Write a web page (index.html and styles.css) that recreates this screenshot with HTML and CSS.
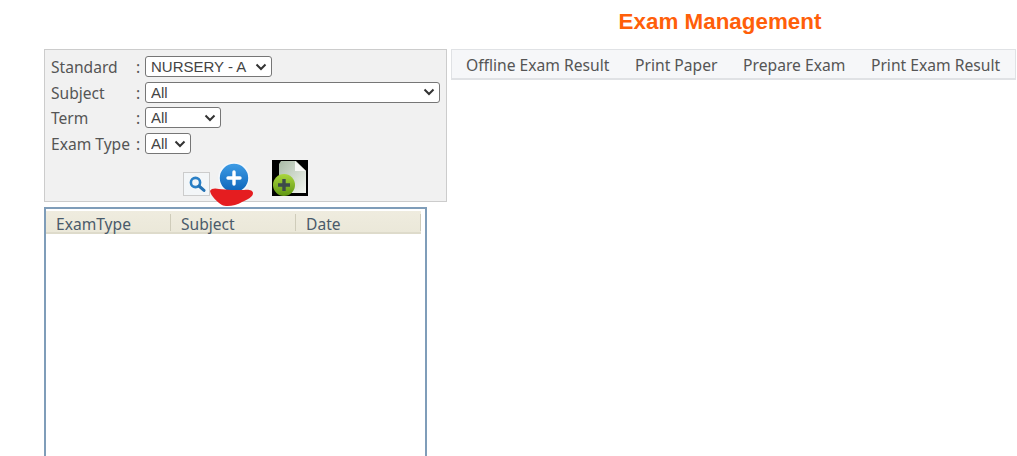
FILE: index.html
```
<!DOCTYPE html>
<html lang="en">
<head>
<meta charset="utf-8">
<title>Exam Management</title>
<link rel="stylesheet" href="styles.css">
</head>
<body>
<header class="title-bar"><h1 class="title">Exam Management</h1></header>
<main class="layout">
  <section class="left">
    <form class="filter">
      <div class="rows">
        <div class="row"><span class="label">Standard</span><span class="colon">:</span><select class="sel sel-std"><option>NURSERY - A</option></select></div>
        <div class="row"><span class="label">Subject</span><span class="colon">:</span><select class="sel sel-sub"><option>All</option></select></div>
        <div class="row"><span class="label">Term</span><span class="colon">:</span><select class="sel sel-term"><option>All</option></select></div>
        <div class="row"><span class="label">Exam Type</span><span class="colon">:</span><select class="sel sel-type"><option>All</option></select></div>
      </div>
      <div class="actions">
        <span class="search-btn">
          <svg width="18" height="18" viewBox="0 0 18 18"><circle cx="7.5" cy="7.5" r="4.6" fill="none" stroke="#2a80c6" stroke-width="2.6"/><path d="M11 11l5 4.4" stroke="#2472b4" stroke-width="3" stroke-linecap="round"/></svg>
        </span>
        <span class="add-btn">
          <svg width="48" height="52" viewBox="0 0 48 52">
            <defs><linearGradient id="blue" x1="0" y1="0" x2="0" y2="1"><stop offset="0" stop-color="#3f9de6"/><stop offset="1" stop-color="#0b62b8"/></linearGradient></defs>
            <circle cx="26" cy="20" r="15" fill="url(#blue)" stroke="#f4f8fc" stroke-width="1.600"/>
            <path d="M26 14v12M20 20h12" stroke="#fff" stroke-width="3.400" stroke-linecap="round"/>
            <path d="M2 33C3 30 8 30 11 31C18 32 30 32 36 32C40 31 45 32 45 35C45 39 40 41 34 44C28 48 18 49 14 47C9 44 3 38 2 33z" fill="#e51d20"/>
          </svg>
        </span>
        <span class="doc-btn">
          <svg width="36" height="36" viewBox="0 0 36 36">
            <defs>
              <linearGradient id="page" x1="0" y1="0" x2="1" y2="1"><stop offset="0" stop-color="#a9bba6"/><stop offset="1" stop-color="#f4f6f1"/></linearGradient>
              <linearGradient id="ball" x1="0" y1="0" x2="0" y2="1"><stop offset="0" stop-color="#a9d63c"/><stop offset="1" stop-color="#5f9612"/></linearGradient>
            </defs>
            <rect width="36" height="36" fill="#000"/>
            <path d="M7 4l2-3h15l10 10v22H7z" fill="url(#page)"/>
            <path d="M23 1l11 10H23z" fill="#f7f8f5"/>
            <circle cx="12" cy="25" r="11" fill="url(#ball)"/>
            <path d="M12 19v12M6 25h12" stroke="#3d4a4a" stroke-width="3.400"/>
          </svg>
        </span>
      </div>
    </form>
    <div class="grid-box">
      <div class="grid-head">
        <div class="col">ExamType</div>
        <div class="col">Subject</div>
        <div class="col">Date</div>
      </div>
    </div>
  </section>
  <nav class="tabs">
    <a class="tab">Offline Exam Result</a>
    <a class="tab">Print Paper</a>
    <a class="tab">Prepare Exam</a>
    <a class="tab">Print Exam Result</a>
  </nav>
</main>
</body>
</html>
```
FILE: styles.css
```
html, body { margin: 0; padding: 0; height: 456px; overflow: hidden; background: #fff; }
body { font-family: "Noto Sans", sans-serif; color: #555; font-size: 15.6px; }
.title-bar { height: 49px; padding-left: 423px; display: flex; justify-content: center; }
.title { margin: 9px 0 0; font: bold 22.4px/26px "Liberation Sans", sans-serif; color: #ff5f0a; }
.layout { display: flex; align-items: flex-start; padding-left: 44px; gap: 4px; }
.left { width: 403px; flex: none; }
.filter { height: 153px; box-sizing: border-box; background: #f1f1f1; border: 1px solid #ccc; padding: 6px 6px 0; }
.rows { display: flex; flex-direction: column; gap: 3.7px; }
.row { display: flex; align-items: flex-start; height: 22px; }
.label { width: 85px; line-height: 23px; }
.colon { width: 9px; line-height: 23px; }
.sel {
  appearance: none;
  height: 21px;
  box-sizing: border-box;
  font: 15px "Liberation Sans", sans-serif;
  color: #444;
  background: #fff url("data:image/svg+xml,%3Csvg xmlns='http://www.w3.org/2000/svg' width='12' height='8'%3E%3Cpath d='M1.500 1.500L6 6l4.500-4.500' fill='none' stroke='%23333' stroke-width='2'/%3E%3C/svg%3E") no-repeat right 4px center;
  border: 1px solid #767676;
  border-radius: 3px;
  padding: 0 0 0 5px;
}
.sel-std { width: 127px; }
.sel-sub { width: 295px; }
.sel-term { width: 76px; }
.sel-type { width: 46px; }
.actions { position: relative; height: 40px; }
.search-btn { position: absolute; left: 132px; top: 17px; width: 27px; height: 24px; box-sizing: border-box; border: 1px solid #ccc; background: #f3f6f8; display: flex; align-items: center; justify-content: center; }
.add-btn { position: absolute; left: 157px; top: 3px; line-height: 0; z-index: 1; }
.doc-btn { position: absolute; left: 221px; top: 5px; line-height: 0; }
.grid-box { margin-top: 5px; width: 383px; height: 260px; box-sizing: border-box; border: 2px solid #7f9db9; padding: 2px 4px 0 0; }
.grid-head { display: flex; height: 23px; box-sizing: border-box; background: linear-gradient(#efecdf, #ebe8d9); border-bottom: 2px solid #dedbcb; }
.col { width: 125px; padding: 3px 0 0 10px; box-sizing: border-box; line-height: 20px; color: #4a5a6a; position: relative; }
.col::after { content: ""; position: absolute; right: 0; top: 3px; height: 17px; width: 1px; background: #cfccba; }
.tabs { flex: none; width: 565px; height: 31px; box-sizing: border-box; display: flex; align-items: center; gap: 25.6px; padding: 1px 0 0 14px; background: #f6f7f9; border: 1px solid #e0e2e5; border-bottom-width: 2px; white-space: nowrap; font-size: 15.65px; }
.tab { color: #555; }
```
